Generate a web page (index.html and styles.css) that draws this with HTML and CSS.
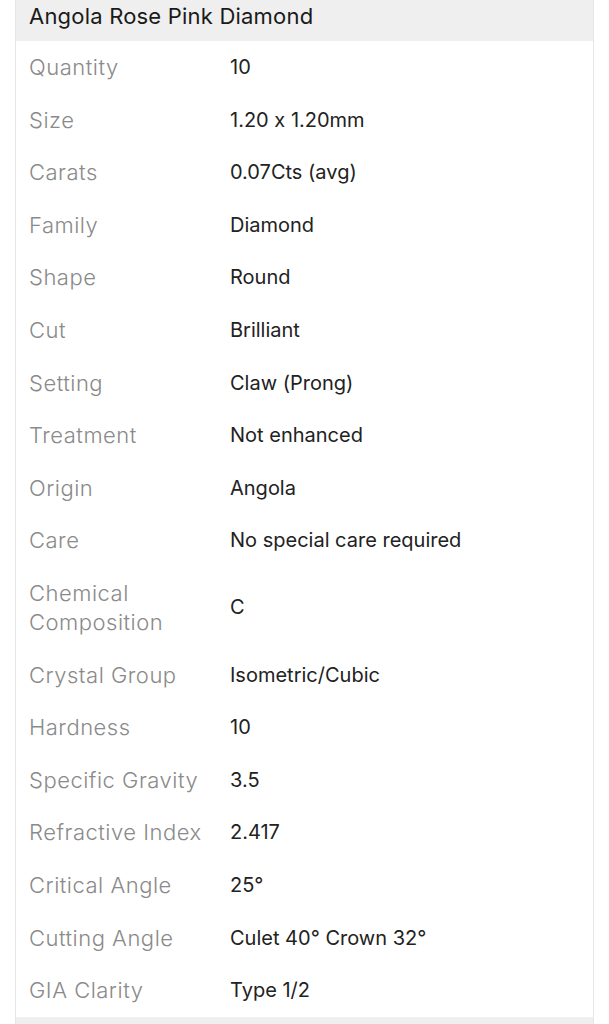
FILE: index.html
```html
<!DOCTYPE html>
<html>
<head>
<meta charset="utf-8">
<link rel="stylesheet" href="styles.css">
</head>
<body>
<div class="card">
  <div class="card-header">Angola Rose Pink Diamond</div>
  <div class="rows">
    <div class="row"><div class="label">Quantity</div><div class="value">10</div></div>
    <div class="row"><div class="label">Size</div><div class="value">1.20 x 1.20mm</div></div>
    <div class="row"><div class="label">Carats</div><div class="value">0.07Cts (avg)</div></div>
    <div class="row"><div class="label">Family</div><div class="value">Diamond</div></div>
    <div class="row"><div class="label">Shape</div><div class="value">Round</div></div>
    <div class="row"><div class="label">Cut</div><div class="value">Brilliant</div></div>
    <div class="row"><div class="label">Setting</div><div class="value">Claw (Prong)</div></div>
    <div class="row"><div class="label">Treatment</div><div class="value">Not enhanced</div></div>
    <div class="row"><div class="label">Origin</div><div class="value">Angola</div></div>
    <div class="row"><div class="label">Care</div><div class="value">No special care required</div></div>
    <div class="row"><div class="label">Chemical<br>Composition</div><div class="value">C</div></div>
    <div class="row"><div class="label">Crystal Group</div><div class="value">Isometric/Cubic</div></div>
    <div class="row"><div class="label">Hardness</div><div class="value">10</div></div>
    <div class="row"><div class="label">Specific Gravity</div><div class="value">3.5</div></div>
    <div class="row"><div class="label">Refractive Index</div><div class="value">2.417</div></div>
    <div class="row"><div class="label">Critical Angle</div><div class="value">25°</div></div>
    <div class="row"><div class="label">Cutting Angle</div><div class="value">Culet 40° Crown 32°</div></div>
    <div class="row"><div class="label">GIA Clarity</div><div class="value">Type 1/2</div></div>
  </div>
  <div class="card-footer"></div>
</div>
</body>
</html>
```
FILE: styles.css
```css
html, body {
  margin: 0;
  padding: 0;
  background: #ffffff;
  font-family: Inter, "Open Sans", sans-serif;
  font-feature-settings: "calt" 0;
}
.card {
  margin: -10px 15px 0 15px;
  border: 1px solid #e6e6e6;
  border-radius: 10px;
  overflow: hidden;
  background: #fff;
}
.card-header {
  background: #efefef;
  height: 50px;
  box-sizing: border-box;
  padding: 11px 13px 0 13px;
  font-size: 22px;
  line-height: 28px;
  letter-spacing: 0.2px;
  color: #1a1a1a;
}
.rows {
  display: flex;
  flex-direction: column;
}
.row {
  display: flex;
  align-items: center;
  padding: 12px 13px 11.6px 13px;
  line-height: 29px;
}
.label {
  width: 201px;
  flex: none;
  color: #8a8a8a;
  font-size: 22px;
  font-weight: 300;
  letter-spacing: 0.5px;
}
.value {
  color: #222;
  font-size: 20px;
}
.card-footer {
  background: #efefef;
  height: 40px;
}
```
